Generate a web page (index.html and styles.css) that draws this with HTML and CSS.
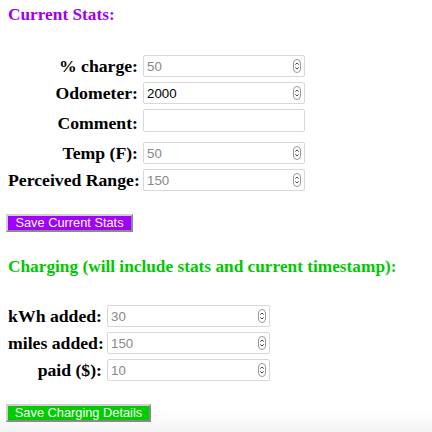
FILE: index.html
```html
<!DOCTYPE html>
<html>
<head>
<meta charset="utf-8">
<link rel="stylesheet" href="styles.css">
</head>
<body>
<h3 class="title title-stats">Current Stats:</h3>
<div class="form form-stats">
  <label class="lbl">% charge:</label>
  <div class="field"><input class="inp" type="text" placeholder="50"><span class="spin"><svg viewBox="0 0 8 14" width="8" height="14"><rect x="0.5" y="0.5" width="7" height="13" rx="3.5" fill="#fff" stroke="#999"/><path d="M2.3 5.6 4 4 5.7 5.6M2.3 8.4 4 10 5.7 8.4" fill="none" stroke="#444" stroke-width="1"/></svg></span></div>
  <label class="lbl">Odometer:</label>
  <div class="field"><input class="inp" type="text" value="2000"><span class="spin"><svg viewBox="0 0 8 14" width="8" height="14"><rect x="0.5" y="0.5" width="7" height="13" rx="3.5" fill="#fff" stroke="#999"/><path d="M2.3 5.6 4 4 5.7 5.6M2.3 8.4 4 10 5.7 8.4" fill="none" stroke="#444" stroke-width="1"/></svg></span></div>
  <label class="lbl">Comment:</label>
  <div class="field field-text"><input class="inp inp-text" type="text"></div>
  <label class="lbl">Temp (F):</label>
  <div class="field"><input class="inp" type="text" placeholder="50"><span class="spin"><svg viewBox="0 0 8 14" width="8" height="14"><rect x="0.5" y="0.5" width="7" height="13" rx="3.5" fill="#fff" stroke="#999"/><path d="M2.3 5.6 4 4 5.7 5.6M2.3 8.4 4 10 5.7 8.4" fill="none" stroke="#444" stroke-width="1"/></svg></span></div>
  <label class="lbl">Perceived Range:</label>
  <div class="field"><input class="inp" type="text" placeholder="150"><span class="spin"><svg viewBox="0 0 8 14" width="8" height="14"><rect x="0.5" y="0.5" width="7" height="13" rx="3.5" fill="#fff" stroke="#999"/><path d="M2.3 5.6 4 4 5.7 5.6M2.3 8.4 4 10 5.7 8.4" fill="none" stroke="#444" stroke-width="1"/></svg></span></div>
</div>
<button class="btn btn-purple">Save Current Stats</button>

<h3 class="title title-charge">Charging (will include stats and current timestamp):</h3>
<div class="form form-charge">
  <label class="lbl">kWh added:</label>
  <div class="field"><input class="inp" type="text" placeholder="30"><span class="spin"><svg viewBox="0 0 8 14" width="8" height="14"><rect x="0.5" y="0.5" width="7" height="13" rx="3.5" fill="#fff" stroke="#999"/><path d="M2.3 5.6 4 4 5.7 5.6M2.3 8.4 4 10 5.7 8.4" fill="none" stroke="#444" stroke-width="1"/></svg></span></div>
  <label class="lbl">miles added:</label>
  <div class="field"><input class="inp" type="text" placeholder="150"><span class="spin"><svg viewBox="0 0 8 14" width="8" height="14"><rect x="0.5" y="0.5" width="7" height="13" rx="3.5" fill="#fff" stroke="#999"/><path d="M2.3 5.6 4 4 5.7 5.6M2.3 8.4 4 10 5.7 8.4" fill="none" stroke="#444" stroke-width="1"/></svg></span></div>
  <label class="lbl">paid ($):</label>
  <div class="field"><input class="inp" type="text" placeholder="10"><span class="spin"><svg viewBox="0 0 8 14" width="8" height="14"><rect x="0.5" y="0.5" width="7" height="13" rx="3.5" fill="#fff" stroke="#999"/><path d="M2.3 5.6 4 4 5.7 5.6M2.3 8.4 4 10 5.7 8.4" fill="none" stroke="#444" stroke-width="1"/></svg></span></div>
</div>
<button class="btn btn-green">Save Charging Details</button>
</body>
</html>
```

FILE: styles.css
```css
html, body {
  margin: 0;
  padding: 0;
}
body {
  padding: 0 8px;
  height: 432px;
  box-sizing: border-box;
  overflow: hidden;
  font-family: "Liberation Serif", "Times New Roman", serif;
  background: linear-gradient(to bottom, #fff 0, #fff 412px, #f3f3f3 432px);
}
.title {
  margin: 0;
  font-size: 17.3px;
  line-height: 20px;
  font-weight: bold;
}
.title-stats {
  color: #a000f0;
  margin-top: 5px;
}
.title-charge {
  color: #00c800;
  margin-top: 25px;
}
.form {
  display: grid;
  column-gap: 5px;
  row-gap: 5px;
  align-items: center;
}
.form-stats {
  grid-template-columns: 130px 162px;
  margin-top: 30px;
}
.form-charge {
  grid-template-columns: 94px 163px;
  margin-top: 28px;
}
.lbl {
  text-align: right;
  font-weight: bold;
  font-size: 17.7px;
  line-height: 22px;
  white-space: nowrap;
  color: #000;
}
.field {
  position: relative;
  height: 22px;
}
.field-text {
  height: 23px;
  margin-bottom: 5px;
}
.inp {
  box-sizing: border-box;
  width: 100%;
  height: 100%;
  margin: 0;
  border: 1px solid #d8d8d8;
  border-radius: 2px;
  padding: 0 0 0 3px;
  font-family: "Liberation Sans", Arial, sans-serif;
  font-size: 13.3px;
  color: #000;
  background: #fff;
  outline: none;
}
.inp::placeholder {
  color: #888;
  opacity: 1;
}
.spin {
  position: absolute;
  right: 4px;
  top: 4px;
  width: 8px;
  height: 14px;
  display: block;
}
.spin svg {
  display: block;
}
.btn {
  display: block;
  box-sizing: border-box;
  margin: 23px 0 0 -2px;
  height: 18px;
  padding: 0;
  text-align: center;
  white-space: nowrap;
  border: 2px solid;
  border-color: #d0d0d0 #8a8a8a #8a8a8a #d0d0d0;
  font-family: "Liberation Sans", Arial, sans-serif;
  font-size: 12.8px;
  line-height: 14px;
  color: #fff;
  cursor: pointer;
}
.btn-purple {
  background: #a000ff;
  width: 127px;
}
.btn-green {
  background: #00cc00;
  width: 145px;
  margin-top: 23px;
}
```
